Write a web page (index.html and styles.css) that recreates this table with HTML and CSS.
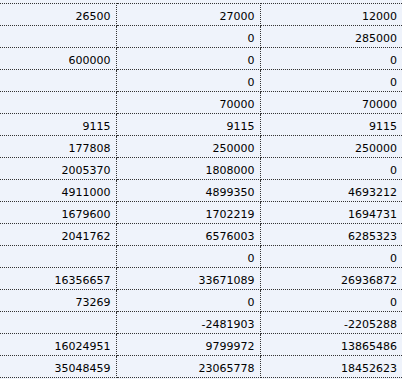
FILE: index.html
```html
<!DOCTYPE html>
<html>
<head>
<meta charset="utf-8">
<link rel="stylesheet" href="styles.css">
</head>
<body>
<table class="grid">
<colgroup><col class="c1"><col class="c2"><col class="c3"></colgroup>
<tbody>
<tr><td>26500</td><td>27000</td><td>12000</td></tr>
<tr><td></td><td>0</td><td>285000</td></tr>
<tr><td>600000</td><td>0</td><td>0</td></tr>
<tr><td></td><td>0</td><td>0</td></tr>
<tr><td></td><td>70000</td><td>70000</td></tr>
<tr><td>9115</td><td>9115</td><td>9115</td></tr>
<tr><td>177808</td><td>250000</td><td>250000</td></tr>
<tr><td>2005370</td><td>1808000</td><td>0</td></tr>
<tr><td>4911000</td><td>4899350</td><td>4693212</td></tr>
<tr><td>1679600</td><td>1702219</td><td>1694731</td></tr>
<tr><td>2041762</td><td>6576003</td><td>6285323</td></tr>
<tr><td></td><td>0</td><td>0</td></tr>
<tr><td>16356657</td><td>33671089</td><td>26936872</td></tr>
<tr><td>73269</td><td>0</td><td>0</td></tr>
<tr><td></td><td>-2481903</td><td>-2205288</td></tr>
<tr><td>16024951</td><td>9799972</td><td>13865486</td></tr>
<tr><td>35048459</td><td>23065778</td><td>18452623</td></tr>
</tbody>
</table>
</body>
</html>
```
FILE: styles.css
```css
html, body {
  margin: 0;
  padding: 0;
  background: #EFF3FB;
  overflow: hidden;
}
body {
  padding-top: 3px;
}
.grid {
  border-collapse: collapse;
  table-layout: fixed;
  width: 402px;
  font-family: "DejaVu Sans", Verdana, sans-serif;
  font-size: 11px;
  color: #000;
}
.c1 { width: 116px; }
.c2 { width: 144px; }
.c3 { width: 142px; }
.grid td {
  border: 1px dotted #333;
  text-align: right;
  padding: 6px 5px 2px 0;
  line-height: 13px;
  height: 13px;
  white-space: nowrap;
}
.grid td:first-child { border-left: none; }
.grid td:last-child { border-right: none; }
```
